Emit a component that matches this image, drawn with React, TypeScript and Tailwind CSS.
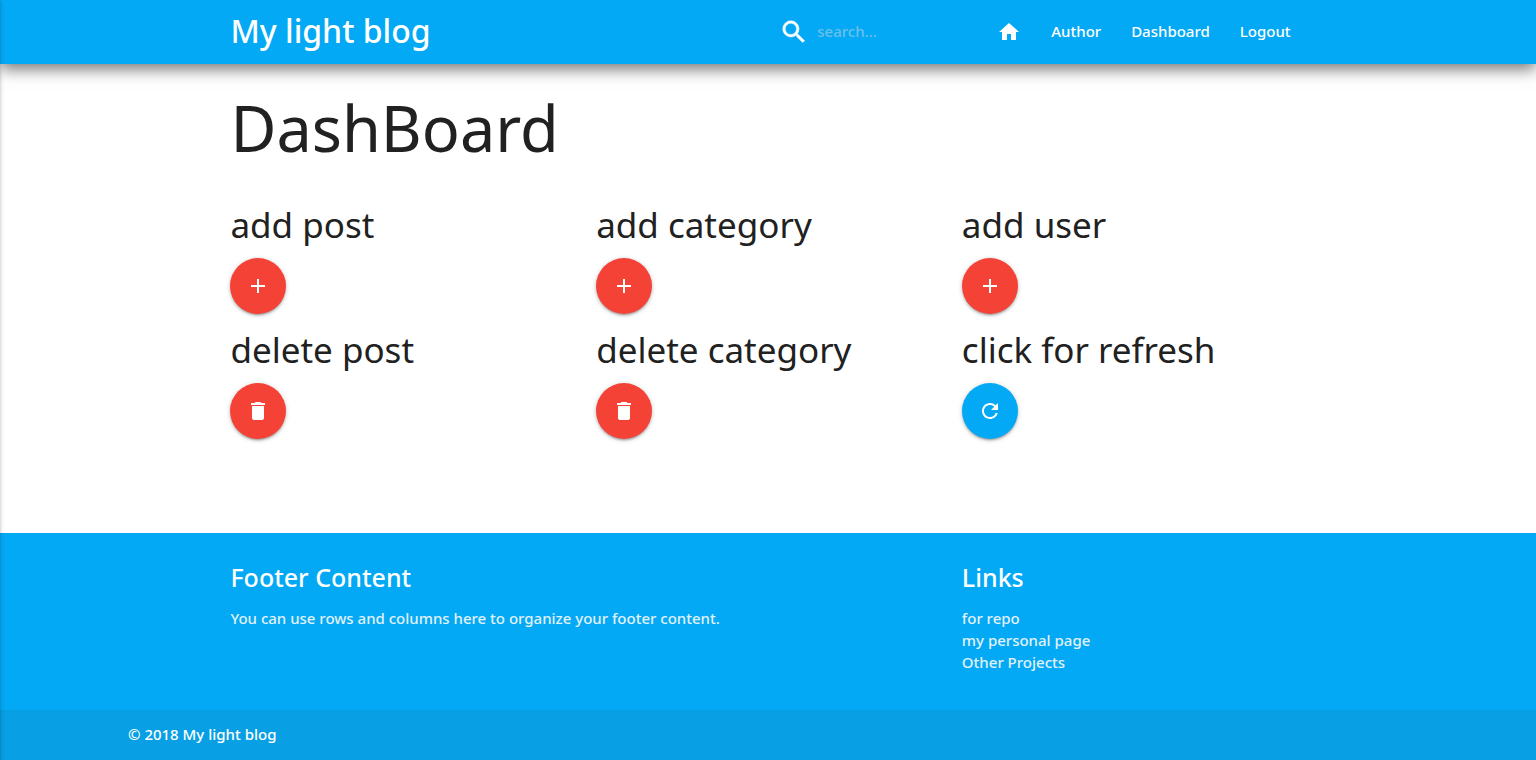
import type { ReactNode } from "react";
import { MdAdd, MdDelete, MdHome, MdRefresh } from "react-icons/md";

type Action = { label: string; icon: ReactNode; color: string };

const actions: Action[] = [
  { label: "add post", icon: <MdAdd />, color: "bg-[#f44336]" },
  { label: "add category", icon: <MdAdd />, color: "bg-[#f44336]" },
  { label: "add user", icon: <MdAdd />, color: "bg-[#f44336]" },
  { label: "delete post", icon: <MdDelete />, color: "bg-[#f44336]" },
  { label: "delete category", icon: <MdDelete />, color: "bg-[#f44336]" },
  { label: "click for refresh", icon: <MdRefresh />, color: "bg-[#03a9f4]" },
];

function SearchIcon() {
  return (
    <svg viewBox="0 0 24 24" className="size-[30px]" fill="currentColor" stroke="currentColor" strokeWidth="0.4">
      <path d="M15.5 14h-.79l-.28-.27A6.471 6.471 0 0 0 16 9.5 6.5 6.5 0 1 0 9.5 16c1.61 0 3.09-.59 4.23-1.57l.27.28v.79l5 4.99L20.49 19l-4.99-5zm-6 0C7.01 14 5 11.99 5 9.5S7.01 5 9.5 5 14 7.01 14 9.5 11.99 14 9.5 14z" />
    </svg>
  );
}

function NavBar() {
  return (
    <header className="relative bg-[#03a9f4] text-white shadow-[0_5px_15px_0_rgba(0,0,0,0.55)]">
      <nav className="mx-auto flex h-16 w-[70%] items-center">
        <a href="#" className="pb-0.5 text-[32px] leading-[60px] font-medium">My light blog</a>
        <form className="ml-auto flex items-center gap-2">
          <label htmlFor="search" aria-label="Search">
            <SearchIcon />
          </label>
          <input
            id="search"
            type="text"
            placeholder="search..."
            className="w-[165px] bg-transparent pb-0.5 text-[15px] font-medium outline-none placeholder:text-[#6cc0ea]"
          />
        </form>
        <ul className="flex items-center text-[15px] font-medium">
          <li>
            <a href="#" aria-label="Home" className="block px-[15px]">
              <MdHome className="size-6" />
            </a>
          </li>
          <li><a href="#" className="block px-[15px] pb-0.5">Author</a></li>
          <li><a href="#" className="block px-[15px] pb-0.5">Dashboard</a></li>
          <li><a href="#" className="block px-[15px] pb-0.5">Logout</a></li>
        </ul>
      </nav>
    </header>
  );
}

function ActionCell({ label, icon, color }: Action) {
  return (
    <div className="flex flex-col items-start">
      <h4 className="mb-[15px] text-[35px] leading-[37px]">{label}</h4>
      <button
        type="button"
        aria-label={label}
        className={`flex size-14 items-center justify-center rounded-full text-2xl text-white shadow-[0_2px_2px_0_rgba(0,0,0,0.14),0_3px_1px_-2px_rgba(0,0,0,0.12),0_1px_5px_0_rgba(0,0,0,0.2)] ${color}`}
      >
        {icon}
      </button>
    </div>
  );
}

function Footer() {
  return (
    <footer className="bg-[#03a9f4] font-medium text-white">
      <div className="mx-auto grid w-[70%] grid-cols-3 gap-x-[22px] pt-[30px] pb-[37px]">
        <div className="col-span-2">
          <h5 className="mb-4 text-[25px] leading-7">Footer Content</h5>
          <p className="text-[15px] leading-[22px] text-[#e1f1fa]">
            You can use rows and columns here to organize your footer content.
          </p>
        </div>
        <div>
          <h5 className="mb-4 text-[25px] leading-7">Links</h5>
          <ul className="text-[15px] leading-[22px] text-[#e1f1fa]">
            <li><a href="#">for repo</a></li>
            <li><a href="#">my personal page</a></li>
            <li><a href="#">Other Projects</a></li>
          </ul>
        </div>
      </div>
      <div className="bg-[#089fe4]">
        <div className="mx-auto flex h-[50px] w-5/6 items-center pb-0.5 text-[15px]">© 2018 My light blog</div>
      </div>
    </footer>
  );
}

export default function App() {
  return (
    <div className="flex min-h-screen flex-col bg-white font-['Noto_Sans',sans-serif] text-[#212121]">
      <NavBar />
      <main className="mx-auto w-[70%] flex-1 pt-[29px] pb-20">
        <h1 className="mb-[43px] text-[63px] leading-[70px]">DashBoard</h1>
        <div className="grid grid-cols-3 gap-x-[22px] gap-y-[17px]">
          {actions.map((action) => (
            <ActionCell key={action.label} {...action} />
          ))}
        </div>
      </main>
      <Footer />
      <aside
        aria-hidden="true"
        className="fixed top-0 -left-72 h-full w-72 shadow-[0_2px_2px_0_rgba(0,0,0,0.14),0_3px_1px_-2px_rgba(0,0,0,0.12),0_1px_5px_0_rgba(0,0,0,0.2)]"
      />
    </div>
  );
}
